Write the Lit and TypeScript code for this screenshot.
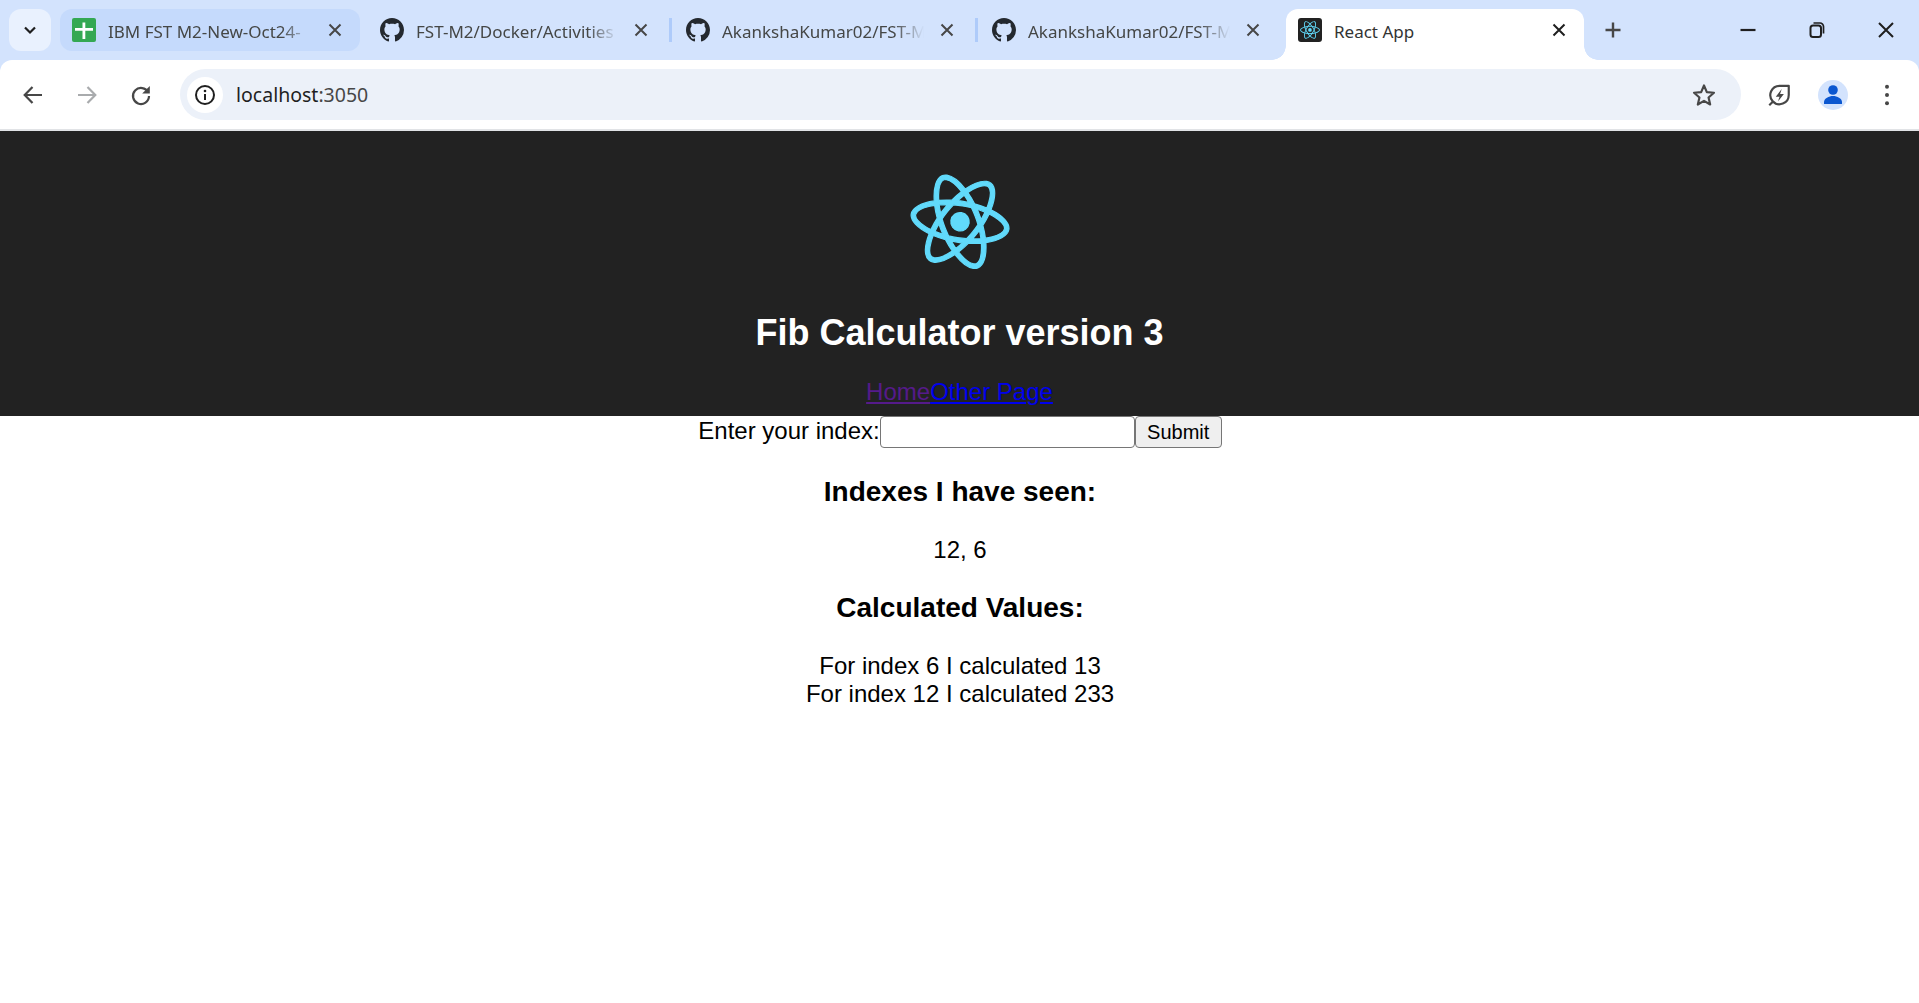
import { LitElement, html, css, svg } from 'lit';
import { customElement } from 'lit/decorators.js';

const githubMark = svg`<path fill="#24292f" d="M8 0C3.58 0 0 3.58 0 8c0 3.54 2.29 6.53 5.47 7.59.4.07.55-.17.55-.38 0-.19-.01-.82-.01-1.49-2.01.37-2.53-.49-2.69-.94-.09-.23-.48-.94-.82-1.13-.28-.15-.68-.52-.01-.53.63-.01 1.08.58 1.23.82.72 1.21 1.87.87 2.33.66.07-.52.28-.87.51-1.07-1.78-.2-3.64-.89-3.64-3.95 0-.87.31-1.59.82-2.15-.08-.2-.36-1.02.08-2.12 0 0 .67-.21 2.2.82.64-.18 1.32-.27 2-.27.68 0 1.36.09 2 .27 1.53-1.04 2.2-.82 2.2-.82.44 1.1.16 1.92.08 2.12.51.56.82 1.27.82 2.15 0 3.07-1.87 3.75-3.65 3.95.29.25.54.73.54 1.48 0 1.07-.01 1.93-.01 2.2 0 .21.15.46.55.38A8.013 8.013 0 0016 8c0-4.42-3.58-8-8-8z"/>`;

const reactPath = 'M666.3 296.5c0-32.5-40.7-63.3-103.1-82.4 14.4-63.6 8-114.2-20.2-130.4-6.5-3.8-14.1-5.6-22.4-5.6v22.3c4.6 0 8.3.9 11.4 2.6 13.6 7.8 19.5 37.5 14.9 75.7-1.1 9.4-2.9 19.3-5.1 29.4-19.6-4.8-41-8.5-63.5-10.9-13.5-18.5-27.5-35.3-41.6-50 32.6-30.3 63.2-46.9 84-46.9V78c-27.5 0-63.5 19.6-99.9 53.6-36.4-33.8-72.4-53.2-99.9-53.2v22.3c20.7 0 51.4 16.5 84 46.6-14 14.7-28 31.4-41.3 49.9-22.6 2.4-44 6.1-63.6 11-2.3-10-4-19.7-5.2-29-4.7-38.2 1.1-67.9 14.6-75.8 3-1.8 6.9-2.6 11.5-2.6V78.5c-8.4 0-16 1.8-22.6 5.6-28.1 16.2-34.4 66.7-19.9 130.1-62.2 19.2-102.7 49.9-102.7 82.3 0 32.5 40.7 63.3 103.1 82.4-14.4 63.6-8 114.2 20.2 130.4 6.5 3.8 14.1 5.6 22.5 5.6 27.5 0 63.5-19.6 99.9-53.6 36.4 33.8 72.4 53.2 99.9 53.2 8.4 0 16-1.8 22.6-5.6 28.1-16.2 34.4-66.7 19.9-130.1 62-19.1 102.5-49.9 102.5-82.3zm-130.2-66.7c-3.7 12.9-8.3 26.2-13.5 39.5-4.1-8-8.4-16-13.1-24-4.6-8-9.5-15.8-14.4-23.4 14.2 2.1 27.9 4.7 41 7.9zm-45.8 106.5c-7.8 13.5-15.8 26.3-24.1 38.2-14.9 1.3-30 2-45.2 2-15.1 0-30.2-.7-45-1.9-8.3-11.9-16.4-24.6-24.2-38-7.6-13.1-14.5-26.4-20.8-39.8 6.2-13.4 13.2-26.8 20.7-39.9 7.8-13.5 15.8-26.3 24.1-38.2 14.9-1.3 30-2 45.2-2 15.1 0 30.2.7 45 1.9 8.3 11.9 16.4 24.6 24.2 38 7.6 13.1 14.5 26.4 20.8 39.8-6.3 13.4-13.2 26.8-20.7 39.9zm32.3-13c5.4 13.4 10 26.8 13.8 39.8-13.1 3.2-26.9 5.9-41.2 8 4.9-7.7 9.8-15.6 14.4-23.7 4.6-8 8.9-16.1 13-24.1zM421.2 430c-9.3-9.6-18.6-20.3-27.8-32 9 .4 18.2.7 27.5.7 9.4 0 18.7-.2 27.8-.7-9 11.7-18.3 22.4-27.5 32zm-74.4-58.9c-14.2-2.1-27.9-4.7-41-7.9 3.7-12.9 8.3-26.2 13.5-39.5 4.1 8 8.4 16 13.1 24 4.7 8 9.5 15.8 14.4 23.4zM420.7 163c9.3 9.6 18.6 20.3 27.8 32-9-.4-18.2-.7-27.5-.7-9.4 0-18.7.2-27.8.7 9-11.7 18.3-22.4 27.5-32zm-74 58.9c-4.9 7.7-9.8 15.6-14.4 23.7-4.6 8-8.9 16-13 24-5.4-13.4-10-26.8-13.8-39.8 13.1-3.1 26.9-5.8 41.2-7.9zm-90.5 125.2c-35.4-15.1-58.3-34.9-58.3-50.6 0-15.7 22.9-35.6 58.3-50.6 8.6-3.7 18-7 27.7-10.1 5.7 19.6 13.2 40 22.5 60.9-9.2 20.8-16.6 41.1-22.2 60.6-9.9-3.1-19.3-6.5-28-10.2zM310 490c-13.6-7.8-19.5-37.5-14.9-75.7 1.1-9.4 2.9-19.3 5.1-29.4 19.6 4.8 41 8.5 63.5 10.9 13.5 18.5 27.5 35.3 41.6 50-32.6 30.3-63.2 46.9-84 46.9-4.5-.1-8.3-1-11.3-2.7zm237.2-76.2c4.7 38.2-1.1 67.9-14.6 75.8-3 1.8-6.9 2.6-11.5 2.6-20.7 0-51.4-16.5-84-46.6 14-14.7 28-31.4 41.3-49.9 22.6-2.4 44-6.1 63.6-11 2.3 10.1 4.1 19.8 5.2 29.1zm38.5-66.7c-8.6 3.7-18 7-27.7 10.1-5.7-19.6-13.2-40-22.5-60.9 9.2-20.8 16.6-41.1 22.2-60.6 9.9 3.1 19.3 6.5 28.1 10.2 35.4 15.1 58.3 34.9 58.3 50.6-.1 15.7-23 35.6-58.4 50.6zM320.8 78.4z';

@customElement('app-root')
export class AppRoot extends LitElement {
  static styles = css`
    :host {
      display: block;
      min-height: 1003px;
      background: #fff;
      font-family: "Liberation Sans", Arial, sans-serif;
      font-size: 24px;
      color: #000;
    }

    /* browser chrome */
    .strip {
      display: flex;
      align-items: flex-start;
      height: 60px;
      box-sizing: border-box;
      padding: 9px 0 0 9px;
      background: #d3e3fd;
      font-family: "Noto Sans", sans-serif;
    }
    .tab-search {
      display: flex;
      align-items: center;
      justify-content: center;
      width: 42px;
      height: 42px;
      margin-right: 9px;
      border-radius: 12px;
      background: #e9f1fe;
    }
    .tab {
      position: relative;
      display: flex;
      align-items: center;
      width: 298px;
      height: 42px;
      box-sizing: border-box;
      padding: 0 16px 0 12px;
      border-radius: 12px;
      flex: none;
    }
    .tab.hover {
      width: 300px;
      background: #c5dafc;
    }
    .tab.active {
      height: 51px;
      padding-bottom: 9px;
      background: #fff;
      border-radius: 12px 12px 0 0;
    }
    .tab.active::before,
    .tab.active::after {
      content: "";
      position: absolute;
      bottom: 0;
      width: 14px;
      height: 14px;
    }
    .tab.active::before {
      left: -14px;
      background: radial-gradient(circle at 0 0, transparent 13.5px, #fff 14px);
    }
    .tab.active::after {
      right: -14px;
      background: radial-gradient(circle at 100% 0, transparent 13.5px, #fff 14px);
    }
    .favicon {
      width: 24px;
      height: 24px;
      flex: none;
      display: block;
    }
    .tab-title {
      flex: 1;
      min-width: 0;
      margin-left: 12px;
      font-size: 17px;
      line-height: 24px;
      padding-top: 3px;
      color: #454746;
      white-space: nowrap;
      overflow: hidden;
      -webkit-mask-image: linear-gradient(to right, #000 calc(100% - 30px), transparent);
      mask-image: linear-gradient(to right, #000 calc(100% - 30px), transparent);
    }
    .active .tab-title {
      color: #333;
      -webkit-mask-image: none;
      mask-image: none;
    }
    .tab-close {
      display: block;
      width: 18px;
      height: 18px;
      flex: none;
      margin-left: 14px;
    }
    .sep {
      display: flex;
      justify-content: center;
      width: 8px;
      height: 42px;
      align-items: center;
      flex: none;
    }
    .sep.on::before {
      content: "";
      width: 3px;
      height: 24px;
      background: #aecbfa;
    }
    .new-tab {
      display: block;
      margin: 9px 0 0 17px;
      width: 24px;
      height: 24px;
      flex: none;
    }
    .win {
      display: flex;
      gap: 3px;
      margin-left: auto;
      height: 42px;
    }
    .win span {
      display: flex;
      align-items: center;
      justify-content: center;
      width: 66px;
      height: 42px;
    }

    .toolbar {
      display: flex;
      align-items: center;
      height: 69px;
      box-sizing: border-box;
      padding: 0 0 0 11px;
      background: #fff;
      border-radius: 12px 12px 0 0;
      font-family: "Noto Sans", sans-serif;
    }
    .strip-wrap {
      background: #d3e3fd;
    }
    .nav {
      display: flex;
      align-items: center;
      justify-content: center;
      width: 44px;
      height: 44px;
      margin-right: 10px;
      flex: none;
    }
    .omnibox {
      display: flex;
      align-items: center;
      flex: none;
      width: 1561px;
      height: 51px;
      margin-left: 7px;
      box-sizing: border-box;
      padding: 0 24px 0 7px;
      border-radius: 26px;
      background: #ecf1f9;
    }
    .site-info {
      display: flex;
      align-items: center;
      justify-content: center;
      width: 36px;
      height: 36px;
      border-radius: 50%;
      background: #fff;
    }
    .url {
      flex: 1;
      margin-left: 13px;
      font-size: 19.5px;
      color: #1f1f1f;
    }
    .url span {
      color: #474747;
    }
    .tools {
      display: flex;
      align-items: center;
      margin-left: 11px;
    }
    .tools .slot {
      display: flex;
      align-items: center;
      justify-content: center;
      width: 54px;
      height: 44px;
    }
    .avatar {
      display: block;
      width: 30px;
      height: 30px;
    }
    .divider {
      height: 2px;
      background: #e1e3e6;
    }

    /* the page itself */
    .app {
      padding-left: 1px;
      text-align: center;
    }
    .app-header {
      height: 225px;
      margin-left: -1px;
      padding: 31px 30px 29px;
      background: #222;
      color: #fff;
    }
    .logo {
      height: 120px;
      width: 170px;
      transform: rotate(9deg);
    }
    .logo path,
    .logo circle {
      stroke: #61dafb;
      stroke-width: 6;
    }
    h1 {
      margin: 24px 0;
      font-size: 36px;
      font-weight: bold;
    }
    .links a {
      color: #00e;
    }
    .links a.visited {
      color: #551a8b;
    }
    .index-input {
      width: 255px;
      height: 32px;
      box-sizing: border-box;
      padding: 1px 3px;
      border: 1px solid #767676;
      border-radius: 4px;
      background: #fff;
      font: 20px "Liberation Sans", Arial, sans-serif;
    }
    .submit {
      width: 87px;
      height: 32px;
      box-sizing: border-box;
      padding: 0;
      border: 1px solid #767676;
      border-radius: 4px;
      background: #efefef;
      color: #000;
      font: 20px "Liberation Sans", Arial, sans-serif;
    }
    h3 {
      margin: 28px 0;
      font-size: 28px;
      font-weight: bold;
    }
  `;

  private closeIcon(color = '#474747') {
    return html`<svg class="tab-close" viewBox="0 0 18 18"><path d="M3.5 3.5l11 11M14.5 3.5l-11 11" stroke=${color} stroke-width="2" fill="none"/></svg>`;
  }

  private tab(title: string) {
    return html`
      <div class="tab">
        <svg class="favicon" viewBox="0 0 16 16">${githubMark}</svg>
        <div class="tab-title">${title}</div>
        ${this.closeIcon()}
      </div>
    `;
  }

  render() {
    return html`
      <div class="strip">
        <div class="tab-search">
          <svg width="18" height="18" viewBox="0 0 18 18"><path d="M4 6.5l5 5 5-5" stroke="#1f1f1f" stroke-width="2.2" fill="none"/></svg>
        </div>
        <div class="tab hover">
          <svg class="favicon" viewBox="0 0 24 24">
            <rect width="24" height="24" rx="2" fill="#34a853"/>
            <path d="M10.500 4.500h2.800v5.500h7.700v2.800h-7.700v8.200h-2.800v-8.200h-7.500v-2.800h7.500z" fill="#fff"/>
          </svg>
          <div class="tab-title">IBM FST M2-New-Oct24-</div>
          ${this.closeIcon()}
        </div>
        <div class="sep"></div>
        ${this.tab('FST-M2/Docker/Activities')}
        <div class="sep on"></div>
        ${this.tab('AkankshaKumar02/FST-M')}
        <div class="sep on"></div>
        ${this.tab('AkankshaKumar02/FST-M')}
        <div class="sep"></div>
        <div class="tab active">
          <svg class="favicon" viewBox="0 0 24 24">
            <rect width="24" height="24" rx="3" fill="#222"/>
            <svg x="-5" y="0" width="34" height="24" viewBox="0 0 841.9 595.3"><path d=${reactPath} fill="#61dafb"/><circle cx="420.9" cy="296.5" r="45.7" fill="#61dafb"/></svg>
          </svg>
          <div class="tab-title">React App</div>
          ${this.closeIcon('#1f1f1f')}
        </div>
        <svg class="new-tab" viewBox="0 0 24 24"><path d="M12 4.500v15M4.500 12h15" stroke="#474747" stroke-width="2.4" fill="none"/></svg>
        <div class="win">
          <span><svg width="18" height="18" viewBox="0 0 18 18"><path d="M1.500 9h15" stroke="#1f1f1f" stroke-width="2.2" fill="none"/></svg></span>
          <span><svg width="18" height="18" viewBox="0 0 18 18"><rect x="2.500" y="4.500" width="10.500" height="11.500" rx="2.500" stroke="#1f1f1f" stroke-width="2" fill="none"/><path d="M5.500 2h6.500a3.500 3.500 0 0 1 3.500 3.500v7" stroke="#1f1f1f" stroke-width="1.700" fill="none"/></svg></span>
          <span><svg width="20" height="20" viewBox="0 0 20 20"><path d="M3 3l14 14M17 3l-14 14" stroke="#1f1f1f" stroke-width="2" fill="none"/></svg></span>
        </div>
      </div>

      <div class="strip-wrap">
        <div class="toolbar">
          <div class="nav"><svg width="24" height="24" viewBox="0 0 24 24"><path d="M21 12H4M11.500 4L3.700 12l7.800 8" stroke="#474747" stroke-width="2.2" fill="none"/></svg></div>
          <div class="nav"><svg width="24" height="24" viewBox="0 0 24 24"><path d="M3 12h17M12.500 4l7.800 8-7.800 8" stroke="#a9abad" stroke-width="2.2" fill="none"/></svg></div>
          <div class="nav"><svg width="24" height="24" viewBox="0 0 24 24"><path d="M19.200 9.500A8 8 0 1 0 20 13" stroke="#474747" stroke-width="2.2" fill="none"/><path d="M20.800 3v7.600h-7.600z" fill="#474747"/></svg></div>
          <div class="omnibox">
            <div class="site-info">
              <svg width="22" height="22" viewBox="0 0 22 22"><circle cx="11" cy="11" r="9" stroke="#1f1f1f" stroke-width="2" fill="none"/><path d="M11 10v6" stroke="#1f1f1f" stroke-width="2"/><circle cx="11" cy="7" r="1.300" fill="#1f1f1f"/></svg>
            </div>
            <div class="url">localhost<span>:3050</span></div>
            <svg width="26" height="26" viewBox="0 0 24 24"><path d="M12 3.200l2.600 6.100 6.600.6-5 4.400 1.500 6.500L12 17.400l-5.700 3.400 1.500-6.500-5-4.400 6.600-.6z" stroke="#474747" stroke-width="2" stroke-linejoin="round" fill="none"/></svg>
          </div>
          <div class="tools">
            <div class="slot"><svg width="26" height="26" viewBox="0 0 24 24"><path d="M21 3.500v8.500a8.500 8.500 0 0 1-14.800 5.700 8.500 8.500 0 0 1 6.300-14.200z" stroke="#474747" stroke-width="2" stroke-linejoin="round" fill="none"/><path d="M3 21.500l3.500-3.500" stroke="#474747" stroke-width="2" fill="none"/><path d="M14.500 6.500l-5.500 7h3.500l-1.500 4.500 5.500-7h-3.500z" fill="#474747"/></svg></div>
            <div class="slot"><svg class="avatar" viewBox="0 0 30 30"><circle cx="15" cy="15" r="15" fill="#d3e3fd"/><circle cx="15" cy="10" r="4.800" fill="#0b57d0"/><path d="M6 24v-2c0-3.500 5-6 9-6s9 2.500 9 6v2z" fill="#0b57d0"/></svg></div>
            <div class="slot"><svg width="24" height="24" viewBox="0 0 24 24"><circle cx="12" cy="3.700" r="2" fill="#474747"/><circle cx="12" cy="12" r="2" fill="#474747"/><circle cx="12" cy="20.300" r="2" fill="#474747"/></svg></div>
          </div>
        </div>
      </div>
      <div class="divider"></div>

      <div class="app">
        <header class="app-header">
          <svg class="logo" viewBox="0 0 841.9 595.3"><path d=${reactPath} fill="#61dafb"/><circle cx="420.9" cy="296.5" r="45.7" fill="#61dafb"/></svg>
          <h1>Fib Calculator version 3</h1>
          <div class="links"><a class="visited" href="#">Home</a><a href="#other">Other Page</a></div>
        </header>
        <form>
          <label>Enter your index:</label><input class="index-input" /><button class="submit" type="button">Submit</button>
        </form>
        <h3>Indexes I have seen:</h3>
        <div>12, 6</div>
        <h3>Calculated Values:</h3>
        <div>For index 6 I calculated 13</div>
        <div>For index 12 I calculated 233</div>
      </div>
    `;
  }
}
